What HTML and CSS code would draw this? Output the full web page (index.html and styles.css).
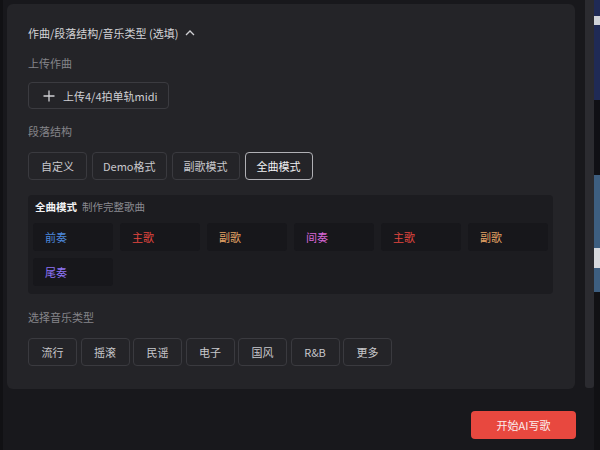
FILE: index.html
```html
<!DOCTYPE html>
<html lang="zh">
<head>
<meta charset="utf-8">
<link rel="stylesheet" href="styles.css">
</head>
<body>
<div class="frame">
  <div class="main">
    <div class="card">
      <div class="title">作曲/段落结构/音乐类型 (选填)
        <svg class="chev" width="10" height="7" viewBox="0 0 10 7"><polyline points="1,6 5,2 9,6" fill="none" stroke="#cfcfd3" stroke-width="1.3"/></svg>
      </div>
      <div class="label l-upload">上传作曲</div>
      <div class="upload">
        <svg class="plus" width="12" height="12" viewBox="0 0 12 12"><path d="M6 0.5V11.5M0.5 6H11.5" stroke="#cfcfd3" stroke-width="1.3"/></svg>
        <span>上传4/4拍单轨midi</span>
      </div>
      <div class="label l-struct">段落结构</div>
      <div class="chips">
        <div class="chip chip-sm">自定义</div>
        <div class="chip">Demo格式</div>
        <div class="chip chip-md">副歌模式</div>
        <div class="chip chip-md active">全曲模式</div>
      </div>
      <div class="panel">
        <div class="panel-head"><b>全曲模式</b><span>制作完整歌曲</span></div>
        <div class="tiles">
          <div class="tile c-blue">前奏</div>
          <div class="tile c-red">主歌</div>
          <div class="tile c-orange">副歌</div>
          <div class="tile c-pink">间奏</div>
          <div class="tile c-red">主歌</div>
          <div class="tile c-orange">副歌</div>
          <div class="tile c-purple">尾奏</div>
        </div>
      </div>
      <div class="label l-genre">选择音乐类型</div>
      <div class="genres">
        <div class="genre">流行</div>
        <div class="genre">摇滚</div>
        <div class="genre">民谣</div>
        <div class="genre">电子</div>
        <div class="genre">国风</div>
        <div class="genre">R&amp;B</div>
        <div class="genre">更多</div>
      </div>
    </div>
    <div class="footer">
      <div class="start">开始AI写歌</div>
    </div>
  </div>
  <div class="scrollbar"><div class="thumb"></div></div>
  <div class="edge"></div>
</div>
</body>
</html>
```
FILE: styles.css
```css
html, body {
  margin: 0;
  padding: 0;
}
body {
  width: 600px;
  height: 450px;
  overflow: hidden;
  background: #18181c;
  font-family: "Noto Sans CJK SC", "Noto Sans", sans-serif;
  color: #d2d2d6;
}
.frame {
  display: flex;
  height: 450px;
}
.main {
  width: 582px;
  border-left: 3px solid #111114;
  display: flex;
  flex-direction: column;
}
.card {
  margin: 4px 0 0 4px;
  width: 568px;
  height: 385px;
  box-sizing: border-box;
  padding: 20px 22px 0 21px;
  background: #242428;
  border-radius: 6px;
  display: flex;
  flex-direction: column;
}
.title {
  font-size: 11px;
  line-height: 18px;
  color: #d4d4d8;
  display: flex;
  align-items: center;
}
.chev {
  margin-left: 6px;
  margin-top: -1px;
}
.label {
  font-size: 11px;
  line-height: 16px;
  color: #84848a;
}
.l-upload { margin-top: 13px; }
.upload {
  margin-top: 11px;
  align-self: flex-start;
  height: 27px;
  box-sizing: border-box;
  border: 1px solid #3b3b40;
  border-radius: 4px;
  display: flex;
  align-items: center;
  padding: 0 10px 0 14px;
  font-size: 11px;
  color: #cfcfd3;
  gap: 8px;
}
.l-struct { margin-top: 14px; }
.chips {
  margin-top: 13px;
  display: flex;
  gap: 5px;
}
.chip {
  height: 28px;
  box-sizing: border-box;
  border: 1px solid #3a3a3f;
  border-radius: 4px;
  padding: 0 10px;
  font-size: 11px;
  line-height: 26px;
  text-align: center;
  color: #c8c8cc;
}
.chip-sm { min-width: 59px; }
.chip-md { min-width: 68px; }
.chip.active {
  border-color: #b0b0b5;
  color: #f0f0f2;
}
.panel {
  margin-top: 15px;
  background: #1c1c20;
  border-radius: 4px;
  padding: 4px 5px 8px 5px;
}
.panel-head {
  font-size: 10.5px;
  line-height: 16px;
  padding-left: 2px;
}
.panel-head b {
  color: #f2f2f4;
  font-weight: 700;
  margin-right: 5px;
}
.panel-head span {
  color: #8a8a90;
}
.tiles {
  margin-top: 8px;
  display: grid;
  grid-template-columns: repeat(6, 1fr);
  gap: 7px;
}
.tile {
  height: 28px;
  background: #17171b;
  border-radius: 3px;
  font-size: 11px;
  line-height: 28px;
  padding-left: 12px;
}
.c-blue { color: #4c88dc; }
.c-red { color: #e2463f; }
.c-orange { color: #e3a264; }
.c-pink { color: #d866d6; }
.c-purple { color: #8e74f4; }
.l-genre { margin-top: 15px; }
.genres {
  margin-top: 13px;
  display: flex;
  gap: 3.5px;
}
.genre {
  width: 49px;
  height: 28px;
  box-sizing: border-box;
  border: 1px solid #3a3a3f;
  border-radius: 4px;
  font-size: 11px;
  line-height: 26px;
  text-align: center;
  color: #c8c8cc;
}
.footer {
  display: flex;
  justify-content: flex-end;
  padding: 22px 6px 0 0;
}
.start {
  width: 105px;
  height: 28px;
  background: #e8483f;
  border-radius: 4px;
  color: #fbeeee;
  font-size: 11px;
  line-height: 28px;
  text-align: center;
}
.scrollbar {
  width: 12px;
}
.thumb {
  width: 9px;
  margin-left: 3px;
  height: 388px;
  background: #2b2b30;
  border-radius: 0 0 3px 3px;
}
.edge {
  width: 6px;
  background: linear-gradient(to bottom, #1f2a55 0, #1f2a55 16px, #cfd2d8 16px, #cfd2d8 25px, #1f2a55 25px, #1f2a55 100px, #101015 100px, #101015 175px, #3d5e80 175px, #3d5e80 248px, #d8dadf 248px, #d8dadf 268px, #3d5e80 268px, #3d5e80 292px, #111114 292px);
}
```
